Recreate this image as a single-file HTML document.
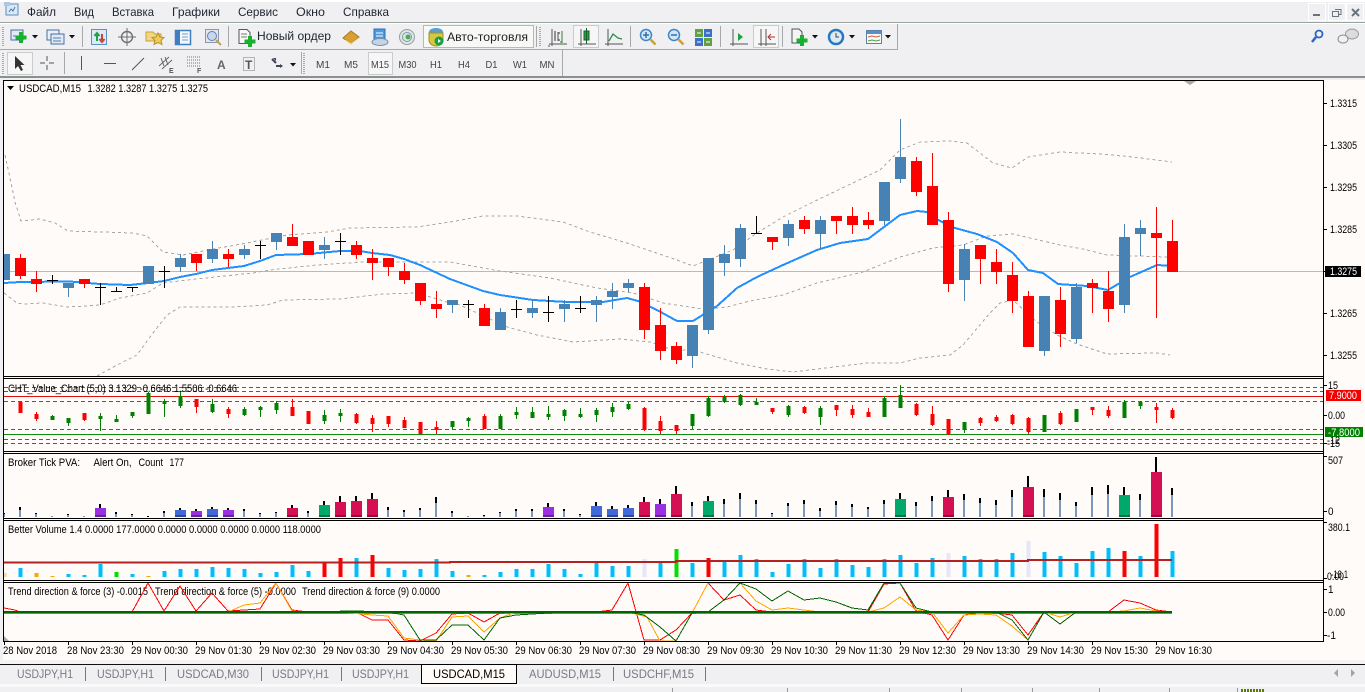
<!DOCTYPE html>
<html><head><meta charset="utf-8"><title>MT4</title>
<style>
html,body{margin:0;padding:0;width:1365px;height:692px;overflow:hidden;background:#f0eff2}
svg{display:block;position:absolute;left:0;top:0}
text{font-family:"Liberation Sans","Noto Sans CJK SC",sans-serif;font-size:11px;fill:#000}
.m text{font-size:12px;fill:#1c2530}
.tf text{font-size:10.5px;fill:#444}
.tab text{font-size:12px;fill:#7a7a80}
.c path{shape-rendering:crispEdges;fill:none}
</style></head><body>
<svg width="1365" height="692" viewBox="0 0 1365 692">
<!-- chrome -->
<rect width="1365" height="692" fill="#f0eff2"/>
<rect width="1365" height="2" fill="#fff"/>
<g shape-rendering="crispEdges">
<rect y="22" width="1365" height="1" fill="#9aa5a0"/><rect y="23" width="1365" height="1" fill="#fff"/>
<rect y="49" width="898" height="1" fill="#a5aaa8"/><rect x="897" y="24" width="1" height="26" fill="#a5aaa8"/>
<rect x="562" y="50" width="1" height="26" fill="#a5aaa8"/>
<rect y="76" width="1365" height="2" fill="#8a908e"/>
</g>
<!-- menu -->
<g>
<rect x="6" y="4" width="12" height="11" fill="#dbe9f7" stroke="#5b8cc0"/><path d="M9 12l2-3 2 2 2-4" stroke="#4a7ab0" fill="none"/><rect x="4" y="2" width="6" height="4" fill="#a9c8e8"/>
</g>
<g class="m">
<text x="27" y="16" textLength="29" lengthAdjust="spacingAndGlyphs">Файл</text>
<text x="74" y="16" textLength="20" lengthAdjust="spacingAndGlyphs">Вид</text>
<text x="112" y="16" textLength="42" lengthAdjust="spacingAndGlyphs">Вставка</text>
<text x="172" y="16" textLength="48" lengthAdjust="spacingAndGlyphs">Графики</text>
<text x="238" y="16" textLength="40" lengthAdjust="spacingAndGlyphs">Сервис</text>
<text x="296" y="16" textLength="29" lengthAdjust="spacingAndGlyphs">Окно</text>
<text x="343" y="16" textLength="46" lengthAdjust="spacingAndGlyphs">Справка</text>
<text x="257" y="40" textLength="74" lengthAdjust="spacingAndGlyphs">Новый ордер</text>
</g>
<!-- window buttons -->
<g shape-rendering="crispEdges" fill="none" stroke="#fff"><rect x="1308.5" y="3.5" width="17" height="17"/><rect x="1328.5" y="3.5" width="17" height="17"/><rect x="1346.5" y="3.5" width="17" height="17"/></g>
<rect x="1313" y="14" width="7" height="2" fill="#6a7480"/>
<path d="M1335 9.5h6v5h-2M1332.5 11.5h6v5h-6z" fill="none" stroke="#6a7480"/>
<path d="M1352 9l7 7M1359 9l-7 7" stroke="#6a7480" stroke-width="2"/>
<!-- grips -->
<path d="M3 27V46M3 53V74M540 27V46M304 53V74" stroke="#a8aca8" stroke-width="2" stroke-dasharray="1 1"/>
<path d="M82.500 26V47M228.500 26V47M536.500 26V47M630.500 26V47M720.500 26V47M782.500 26V47M64.500 52V74M301.500 52V74" stroke="#a5aaa8" shape-rendering="crispEdges"/>
<!-- toolbar selected boxes -->
<g shape-rendering="crispEdges">
<rect x="573.500" y="25.500" width="25" height="22" fill="#f6f6f6" stroke="#c8cccc"/>
<rect x="753.500" y="25.500" width="25" height="22" fill="#f6f6f6" stroke="#c8cccc"/>
<rect x="7.500" y="52.500" width="25" height="22" fill="#f6f6f6" stroke="#c8cccc"/>
<rect x="368.500" y="52.500" width="24" height="22" fill="#f6f6f6" stroke="#c8cccc"/>
<rect x="423.500" y="25.500" width="110" height="22" fill="#f8f8f6" stroke="#b5b9b9"/>
</g>
<!-- toolbar 1 icons -->
<rect x="11" y="30" width="12" height="10" fill="#dfeaf6" stroke="#47709e"/><path d="M13 36h8" stroke="#47709e"/>
<path d="M21 32v11M15.500 37.500h11" stroke="#18b030" stroke-width="4"/>
<path d="M32 35h6l-3 3.500z" fill="#111"/>
<rect x="47" y="30" width="12" height="10" fill="#e8f0f8" stroke="#47709e"/><rect x="51" y="34" width="13" height="10" fill="#dfeaf6" stroke="#47709e"/><path d="M53 38h8M53 41h8" stroke="#5a7fa8"/>
<path d="M69 35h6l-3 3.500z" fill="#111"/>
<rect x="91.500" y="29.500" width="15" height="15" fill="#dceaf8" stroke="#5a92c8"/><path d="M97 41v-6M94.500 36l2.500-3 2.500 3" stroke="#20a040" fill="none" stroke-width="2"/><path d="M102 34v6M99.500 39l2.500 3 2.500-3" stroke="#d04030" fill="none" stroke-width="2"/>
<circle cx="127" cy="37" r="5.500" fill="none" stroke="#6f6f6f" stroke-width="1.400"/><path d="M127 28v18M118 37h18" stroke="#6f6f6f"/>
<path d="M146 32h7l2 2h6v7h-15z" fill="#f2d680" stroke="#c8a040"/><path d="M158 33l2 4 4 .5-3 3 1 4-4-2-4 2 1-4-3-3 4-.5z" fill="#f0cc50" stroke="#b89030"/>
<rect x="175.500" y="30.500" width="15" height="14" fill="#f4f8fc" stroke="#3f7fc0" stroke-width="1.500"/><rect x="176" y="31" width="4" height="13" fill="#3f7fc0"/><path d="M182 34h6M182 37h6M182 40h6" stroke="#70a0d0"/>
<rect x="205.500" y="29.500" width="13" height="13" fill="#e3e8f0" stroke="#8a96a8"/><circle cx="212" cy="36" r="4.500" fill="#c8d8ec" stroke="#6080a8"/><path d="M216 40l5 5" stroke="#c8a050" stroke-width="2"/>
<path d="M239 29.500h8l3 3v11h-11z" fill="#f8f8f8" stroke="#555"/><path d="M241 34h6M241 37h6" stroke="#777"/>
<path d="M250 36v11M244.500 41.500h11" stroke="#18b030" stroke-width="4"/>
<path d="M343 38l8-7 8 6-8 7z" fill="#d8a030" stroke="#a87820"/><path d="M345 40l6 4 8-6" stroke="#f5e2a0" fill="none"/>
<rect x="374" y="29" width="11" height="11" fill="#4b9ae0" stroke="#2c70b8"/><path d="M376 33h7M376 36h7" stroke="#fff"/><ellipse cx="380" cy="42" rx="8" ry="3.500" fill="#c4d4e4" stroke="#7a90a8"/>
<circle cx="407" cy="37" r="7.500" fill="#dfe8de" stroke="#90a0a0"/><circle cx="407" cy="37" r="4.500" fill="none" stroke="#7a98b8"/><circle cx="408" cy="37" r="2.500" fill="#50a860"/>
<ellipse cx="436" cy="32" rx="7" ry="4" fill="#5b9fd0"/><path d="M429 33h14v7a7 6 0 0 1-14 0z" fill="#d8c840" stroke="#a09020"/><circle cx="439" cy="41" r="4.500" fill="#18a040"/><path d="M438 39l3 2-3 2z" fill="#fff"/>
<text x="447" y="41" textLength="81" lengthAdjust="spacingAndGlyphs" style="font-size:12px;fill:#222">Авто-торговля</text>
<g fill="none" stroke="#555"><path d="M552 29v17M549 44h18M550 46h-2M558 32v9"/></g>
<path d="M555 31v10M560 33h-2M558 40h2" stroke="#333" fill="none"/><path d="M562 31v12M560 42h2" stroke="#308030" fill="none"/>
<path d="M581 29v17M578 44h18" stroke="#555" fill="none"/><rect x="584" y="31" width="5" height="9" fill="#28a040" stroke="#186028"/><path d="M586.500 28v16" stroke="#186028"/>
<path d="M608 29v17M605 44h18" stroke="#555" fill="none"/><path d="M609 41l4-7 5 4 4 1" stroke="#2f8f50" fill="none" stroke-width="1.300"/>
<circle cx="646" cy="35" r="5.500" fill="#d4e6f6" stroke="#3d86c8" stroke-width="1.500"/><path d="M643 35h6M646 32v6" stroke="#2f70b0" stroke-width="1.500"/><path d="M650.500 39.500l5 5" stroke="#c8a040" stroke-width="2.500"/>
<circle cx="674" cy="35" r="5.500" fill="#d4e6f6" stroke="#3d86c8" stroke-width="1.500"/><path d="M671 35h6" stroke="#2f70b0" stroke-width="1.500"/><path d="M678.500 39.500l5 5" stroke="#c8a040" stroke-width="2.500"/>
<g shape-rendering="crispEdges"><rect x="695" y="29" width="8" height="8" fill="#60a040"/><rect x="704" y="29" width="8" height="8" fill="#3a70c8"/><rect x="695" y="38" width="8" height="8" fill="#3a70c8"/><rect x="704" y="38" width="8" height="8" fill="#60a040"/><path d="M697 33h4M706 33h4M697 42h4M706 42h4" stroke="#fff"/></g>
<path d="M733 29v17M730 44h18" stroke="#555" fill="none"/><path d="M738 33l5 4-5 4z" fill="#20a040"/>
<path d="M761 29v17M758 44h18M766 29v17" stroke="#555" fill="none"/><path d="M768 37h7M771 34l-3 3 3 3" stroke="#b03030" fill="none"/>
<path d="M792 29h7l3 3v11h-10z" fill="#f4f4f4" stroke="#555"/><path d="M802 35v11M796.500 40.500h11" stroke="#18b030" stroke-width="4"/>
<path d="M812 35h6l-3 3.500z" fill="#111"/>
<circle cx="836" cy="37" r="7" fill="#dceaf6" stroke="#2878c0" stroke-width="2.500"/><path d="M836 33v4h3" stroke="#444" fill="none"/>
<path d="M849 35h6l-3 3.500z" fill="#111"/>
<rect x="866.500" y="30.500" width="15" height="13" fill="#f6f8fa" stroke="#5a82a8"/><rect x="867" y="31" width="14" height="3" fill="#5a90c8"/><path d="M868 37l4-1 4 1 4-1" stroke="#d06040" fill="none"/><path d="M868 41l4-1 4 1 4-1" stroke="#50a050" fill="none"/>
<path d="M885 35h6l-3 3.500z" fill="#111"/>
<circle cx="1319" cy="34" r="3.500" fill="none" stroke="#2f65c8" stroke-width="1.800"/><path d="M1316 37l-4 5" stroke="#2f65c8" stroke-width="2.500"/>
<ellipse cx="1352" cy="34" rx="6.500" ry="5" fill="#dcdcdc" stroke="#9a9a9a"/><ellipse cx="1343" cy="39" rx="5" ry="4" fill="#f0f0f0" stroke="#8a8a8a"/>
<!-- toolbar 2 icons -->
<path d="M15 56v13l3-3 3 5 2-1-2.500-5h4z" fill="#333"/>
<path d="M47 56v5M47 65v5M40 63h5M49 63h5" stroke="#555" fill="none"/>
<path d="M81.500 56v14M104 63.500h12M132 70l12-12" stroke="#555" fill="none"/>
<path d="M159 66l10-9M162 69l10-9M161 58l3 8M165 57l3 8" stroke="#666" fill="none"/><text x="169" y="73" style="font-size:7px;fill:#555;font-weight:bold">E</text>
<path d="M187 57h13M187 60h13M187 63h13M187 66h13" stroke="#777" stroke-dasharray="1 1" fill="none"/><text x="197" y="73" style="font-size:7px;fill:#555;font-weight:bold">F</text>
<text x="217" y="69" style="font-size:12px;fill:#666;font-weight:bold">A</text>
<rect x="243.500" y="57.500" width="11" height="13" fill="none" stroke="#777" stroke-dasharray="1 1"/><text x="245" y="69" style="font-size:12px;fill:#555;font-weight:bold">T</text>
<path d="M272 59l4 4M276 66h6" stroke="#445" stroke-width="2"/><path d="M273 58h3v3zM280 64l3 2-3 2z" fill="#445"/>
<path d="M290 63h6l-3 3.500z" fill="#111"/>
<g class="tf">
<text x="316" y="68" textLength="14" lengthAdjust="spacingAndGlyphs">M1</text><text x="344" y="68" textLength="14" lengthAdjust="spacingAndGlyphs">M5</text><text x="371" y="68" textLength="18" lengthAdjust="spacingAndGlyphs">M15</text><text x="398.500" y="68" textLength="18" lengthAdjust="spacingAndGlyphs">M30</text><text x="430" y="68" textLength="12" lengthAdjust="spacingAndGlyphs">H1</text><text x="458" y="68" textLength="12" lengthAdjust="spacingAndGlyphs">H4</text><text x="485.500" y="68" textLength="12" lengthAdjust="spacingAndGlyphs">D1</text><text x="513" y="68" textLength="14" lengthAdjust="spacingAndGlyphs">W1</text><text x="539.500" y="68" textLength="15" lengthAdjust="spacingAndGlyphs">MN</text>
</g>

<!-- chart bg -->
<rect x="3" y="80" width="1362" height="580" fill="#fffbf8"/>
<rect x="1362" y="78" width="3" height="584" fill="#fffbf8"/>
<rect x="0" y="78" width="1365" height="2" fill="#f0eff2"/>
<rect x="0" y="80" width="3" height="582" fill="#f0eff2"/>
<rect x="0" y="660" width="1365" height="4" fill="#f4f3f5"/>

<!-- main chart -->
<path d="M4 271.500H1323" stroke="#bdb9b3" shape-rendering="crispEdges"/>
<g fill="none" stroke="#aaa6a2" stroke-dasharray="3 3" shape-rendering="crispEdges">
<path d="M5 155L10 178 15 202 21 221 40 219 55 223 68 231 133 233 147 236 163 252 183 255 213 249 247 243 287 235 327 232 350 228 417 227 450 222 483 216 517 216 563 222 590 232 627 243 677 260 693 266 733 250 757 233 783 217 813 202 880 170 900 150 920 142 950 141 967 143 993 163 1012 168 1028 157 1060 152 1100 154 1133 157 1172 162"/>
<path d="M4 293L17 303 23 304 43 303 67 307 87 306 100 305 120 298 147 293 163 283 187 280 253 273 270 270 317 265 363 262 450 262 500 271 550 278 597 288 633 293 663 303 703 309 727 307 750 301 783 295 817 283 863 272 900 257 933 248 963 245 987 236 1013 234 1060 245 1083 249 1107 255 1167 257"/>
<path d="M97 376L117 365 137 355 153 333 167 315 180 307 233 307 267 305 283 300 340 299 383 294 417 293 447 302 460 305 507 327 537 335 573 342 620 339 650 342 667 348 700 352 737 363 767 369 793 372 867 363 900 363 920 358 950 355 963 345 990 313 1000 303 1013 300 1027 313 1037 322 1057 335 1077 344 1107 354 1157 353 1170 355"/>
</g>
<path fill="none" stroke="#1e90ff" stroke-width="2" shape-rendering="crispEdges" d="M4 283L20 282 70 281.500 100 284 130 285 148 283 164 281 180 277 196 274 212 270 228 268 244 266 260 261 276 255 292 254.500 308 254 340 251 360 251 372 253 390 255 404 259 420 265 450 279 483 291 500 295 533 300 567 302 603 302 627 298 638 301 657 310 677 321 693 321 717 306 737 288 757 277 783 265 817 250 840 243 868 239 900 215 917 211 927 212 938 220 955 228 977 234 997 242 1013 253 1028 270 1043 273 1058 284 1087 286 1108 290 1130 277 1157 265 1172 266"/>
<g class="c">
<path stroke="#4682b4" d="M68.500 283V297M180.500 254V272M212.500 241V263M244.500 245V259M276.500 233V250M324.500 237V259M452.500 300V313M500.500 308V330M532.500 300V318M564.500 300V322M596.500 296V322M612.500 283V309M628.500 279V292M692.500 325V368M708.500 258V334M724.500 245V276M740.500 224V267M788.500 220V246M820.500 216V250M884.500 182V225M900.500 119V183M964.500 244V301M1044.500 296V356M1076.500 283V343M1124.500 224V313M1140.500 220V256"/>
<path stroke="#4682b4" stroke-width="11" d="M68.500 283V288M148.500 266V284M180.500 258V267M212.500 249V259M244.500 249V255M276.500 233V242M324.500 245V250M452.500 300V305M500.500 312V330M532.500 308V313M564.500 304V309M596.500 300V305M612.500 291V297M628.500 283V288M692.500 325V356M708.500 258V330M724.500 254V263M740.500 228V259M788.500 224V238M820.500 220V234M884.500 182V221M900.500 157V179M964.500 249V280M1044.500 296V351M1076.500 287V339M1124.500 237V305M1140.500 228V234"/>
<path stroke="#4682b4" stroke-width="6" d="M7 254V280"/>
<path stroke="#ff0000" d="M20.500 254V279M36.500 271V292M84.500 279V288M196.500 254V271M228.500 249V267M292.500 224V246M356.500 241V259M372.500 249V280M388.500 258V276M404.500 263V284M420.500 283V305M436.500 291V318M484.500 304V326M644.500 283V339M660.500 308V360M676.500 342V364M772.500 237V250M804.500 216V234M836.500 216V234M852.500 207V234M868.500 212V229M916.500 157V196M932.500 153V225M948.500 212V292M980.500 245V284M996.500 249V284M1012.500 262V313M1028.500 291V347M1060.500 287V347M1092.500 279V313M1108.500 271V322M1156.500 207V318M1172.500 220V272"/>
<path stroke="#ff0000" stroke-width="11" d="M20.500 258V276M36.500 279V284M84.500 279V284M196.500 254V263M228.500 254V259M292.500 237V246M308.500 241V255M356.500 245V255M372.500 258V263M388.500 258V267M404.500 271V280M420.500 283V301M436.500 304V309M484.500 308V326M644.500 287V330M660.500 325V351M676.500 346V360M772.500 237V242M804.500 220V229M836.500 216V221M852.500 216V225M868.500 220V225M916.500 161V192M932.500 186V225M948.500 220V284M980.500 245V259M996.500 262V272M1012.500 275V301M1028.500 296V347M1060.500 300V334M1092.500 283V288M1108.500 291V309M1156.500 233V238M1172.500 241V272"/>
<path stroke="#000" d="M52.500 275V284M47 280.500H58M100.500 283V305M95 287.500H106M116.500 287V292M111 291.500H122M132.500 287V292M127 287.500H138M164.500 266V288M159 271.500H170M260.500 241V259M255 245.500H266M340.500 233V255M335 241.500H346M468.500 300V318M463 304.500H474M516.500 300V318M511 309.500H522M548.500 296V322M543 312.500H554M580.500 296V313M575 308.500H586M756.500 216V233M751 233.500H762"/>
</g>
<path d="M1184 81h12l-6 4z" fill="#a8a8a8"/>
<path d="M7 86h7l-3.500 4z" fill="#000"/>
<text x="19" y="92" textLength="62" lengthAdjust="spacingAndGlyphs">USDCAD,M15</text>
<text x="87.500" y="92" textLength="120.500" lengthAdjust="spacingAndGlyphs">1.3282 1.3287 1.3275 1.3275</text>

<!-- CHT panel -->
<g class="c">
<path stroke="#5a5a5a" stroke-dasharray="4 3" d="M4 387.500H1323M4 391.500H1323M4 401.500H1323M4 429.500H1323M4 439.500H1323M4 443.500H1323"/>
<path stroke="#e01010" d="M4 396.500H1323"/>
<path stroke="#108a10" d="M4 434.500H1323"/>
<path stroke="#ff0000" d="M20.500 401V413M36.500 412V421M84.500 413V421M196.500 399V413M228.500 407V418M292.500 399V416M308.500 411V424M356.500 413V424M372.500 415V432M388.500 416V427M404.500 417V428M420.500 422V434M436.500 421V434M484.500 414V429M644.500 407V431M660.500 416V434M676.500 425V434M772.500 408V414M804.500 406V414M836.500 405V416M852.500 405V418M868.500 408V417M916.500 403V416M932.500 406V426M948.500 419V435M980.500 417V426M996.500 415V422M1012.500 414V425M1028.500 417V434M1060.500 411V425M1092.500 407V415M1108.500 406V418M1156.500 403V423M1172.500 408V419"/>
<path stroke="#ff0000" stroke-width="4" d="M20.500 402V413M36.500 414V419M84.500 413V420M196.500 399V407M228.500 409V414M292.500 407V416M308.500 411V424M356.500 414V423M372.500 418V424M388.500 416V424M404.500 420V428M420.500 422V434M436.500 427V430M484.500 416V429M644.500 408V430M660.500 421V431M676.500 425V431M772.500 408V412M804.500 407V413M836.500 405V410M852.500 409V415M868.500 412V417M916.500 404V415M932.500 414V425M948.500 419V434M980.500 418V423M996.500 417V421M1012.500 415V424M1028.500 418V432M1060.500 413V424M1092.500 407V410M1108.500 410V416M1156.500 407V410M1172.500 410V418"/>
<path stroke="#008000" d="M52.500 415V420M68.500 418V426M100.500 413V431M116.500 415V422M132.500 412V418M148.500 392V414M164.500 399V417M180.500 391V408M212.500 399V413M244.500 407V416M260.500 406V417M276.500 401V414M324.500 410V424M340.500 409V422M452.500 421V430M468.500 417V427M500.500 414V429M516.500 407V419M532.500 407V418M548.500 406V420M564.500 409V421M580.500 408V418M596.500 408V422M612.500 403V417M628.500 402V410M692.500 414V429M708.500 396V417M724.500 395V403M740.500 394V406M756.500 398V405M788.500 405V417M820.500 406V425M884.500 396V417M900.500 385V408M964.500 422V433M1044.500 415V432M1076.500 409V422M1124.500 400V418M1140.500 401V409"/>
<path stroke="#008000" stroke-width="4" d="M52.500 416V420M68.500 418V423M100.500 416V419M116.500 419V422M132.500 412V416M148.500 393V414M164.500 401V404M180.500 396V406M212.500 404V412M244.500 409V415M260.500 407V410M276.500 403V410M324.500 415V421M340.500 413V416M452.500 421V427M468.500 418V421M500.500 416V429M516.500 412V415M532.500 412V418M548.500 414V417M564.500 410V416M580.500 414V417M596.500 410V415M612.500 407V412M628.500 404V409M692.500 414V426M708.500 398V416M724.500 397V402M740.500 395V405M756.500 402V405M788.500 406V415M820.500 408V417M884.500 398V417M900.500 395V408M964.500 422V430M1044.500 415V432M1076.500 409V422M1124.500 402V418M1140.500 402V406"/>
</g>
<text x="8" y="392" textLength="229" lengthAdjust="spacingAndGlyphs">CHT_Value_Chart (5,0) 3.1329 -0.6646 1.5506 -0.6646</text>

<!-- Broker panel -->
<text x="8" y="466" textLength="72" lengthAdjust="spacingAndGlyphs">Broker Tick PVA:</text>
<text x="93.500" y="466" textLength="38" lengthAdjust="spacingAndGlyphs">Alert On,</text>
<text x="138.500" y="466" textLength="24.500" lengthAdjust="spacingAndGlyphs">Count</text>
<text x="169.500" y="466" textLength="14.500" lengthAdjust="spacingAndGlyphs">177</text>
<g class="c">
<path stroke="#7c98bb" stroke-width="2" d="M4 513V517M20 507V517M36 513V517M52 516V517M68 514V517M84 516V517M116 512V517M132 514V517M148 516V517M164 511V517M244 509V517M260 513V517M276 512V517M308 511V517M388 507V517M404 510V517M420 508V517M436 497V517M452 511V517M468 516V517M484 515V517M500 512V517M516 509V517M532 509V517M564 509V517M580 514V517M692 502V517M724 499V517M740 493V517M756 500V517M772 513V517M788 503V517M804 500V517M820 508V517M836 501V517M852 504V517M868 507V517M884 500V517M916 502V517M932 496V517M964 494V517M980 498V517M996 500V517M1012 490V517M1044 489V517M1060 493V517M1076 502V517M1092 487V517M1108 485V517M1140 494V517M1172 488V517"/>
<path stroke="#000" stroke-width="2" d="M4 513V514M20 507V510M36 513V514M68 514V515M116 512V514M132 514V515M148 516V517M164 511V513M244 509V511M260 513V514M276 512V513M308 511V513M388 507V510M404 510V512M420 508V510M436 497V503M452 511V513M484 515V516M500 512V513M516 509V511M532 509V511M564 509V511M580 514V515M692 502V506M724 499V504M740 493V499M756 500V504M772 513V514M788 503V506M804 500V504M820 508V511M836 501V505M852 504V507M868 507V509M884 500V504M916 502V506M932 496V501M964 494V500M980 498V503M996 500V505M1012 490V497M1044 489V497M1060 493V500M1076 502V506M1092 487V495M1108 485V494M1140 494V500M1172 488V495M100 504V508M180 508V510M196 509V511M212 507V509M228 508V510M292 505V508M324 501V505M340 496V502M356 496V501M372 493V499M548 503V507M596 502V506M612 506V509M628 505V508M644 497V502M660 499V504M676 486V494M708 496V501M900 493V499M948 490V497M1028 476V487M1124 487V495M1156 457V472"/>
<path stroke="#9a30e0" stroke-width="11" d="M100.500 508V517M196.500 511V517M228.500 510V517M548.500 507V517M660.500 504V517"/>
<path stroke="#4169d8" stroke-width="11" d="M180.500 510V517M212.500 509V517M596.500 506V517M612.500 509V517M628.500 508V517"/>
<path stroke="#d40f54" stroke-width="11" d="M292.500 508V517M340.500 502V517M356.500 501V517M372.500 499V517M644.500 502V517M676.500 494V517M948.500 497V517M1028.500 487V517M1156.500 472V517"/>
<path stroke="#00a86b" stroke-width="11" d="M324.500 505V517M708.500 501V517M900.500 499V517M1124.500 495V517"/>
<path stroke="#000" stroke-opacity=".3" stroke-width="11" d="M100.500 515V517M180.500 515V517M196.500 515V517M212.500 515V517M228.500 515V517M292.500 515V517M324.500 515V517M340.500 515V517M356.500 515V517M372.500 515V517M548.500 515V517M596.500 515V517M612.500 515V517M628.500 515V517M644.500 515V517M660.500 515V517M676.500 515V517M708.500 515V517M900.500 515V517M948.500 515V517M1028.500 515V517M1124.500 515V517M1156.500 515V517"/>
</g>

<!-- Better volume -->
<text x="8" y="533" textLength="313" lengthAdjust="spacingAndGlyphs">Better Volume 1.4 0.0000 177.0000 0.0000 0.0000 0.0000 0.0000 118.0000</text>
<g class="c">
<path stroke="#00bfff" stroke-width="4" d="M20.500 568V577M68.500 574V577M84.500 575V577M100.500 564V577M132.500 574V577M164.500 571V577M180.500 569V577M196.500 569V577M212.500 567V577M228.500 568V577M244.500 569V577M260.500 573V577M276.500 572V577M292.500 565V577M308.500 571V577M356.500 558V577M388.500 568V577M404.500 570V577M420.500 569V577M436.500 559V577M452.500 571V577M484.500 575V577M500.500 572V577M516.500 569V577M532.500 569V577M548.500 564V577M564.500 569V577M580.500 574V577M596.500 563V577M612.500 566V577M628.500 566V577M660.500 563V577M692.500 563V577M724.500 560V577M740.500 555V577M756.500 559V577M772.500 572V577M788.500 564V577M804.500 559V577M820.500 568V577M836.500 559V577M852.500 565V577M868.500 567V577M884.500 559V577M900.500 555V577M916.500 563V577M932.500 558V577M964.500 556V577M980.500 559V577M996.500 559V577M1012.500 553V577M1044.500 552V577M1060.500 556V577M1076.500 563V577M1092.500 551V577M1108.500 548V577M1140.500 556V577M1172.500 551V577"/>
<path stroke="#ff0000" stroke-width="4" d="M324.500 563V577M340.500 558V577M372.500 555V577M708.500 558V577M1124.500 551V577M1156.500 524V577"/>
<path stroke="#ffa500" stroke-width="4" d="M36.500 573V577M52.500 576V577M148.500 576V577M468.500 575V577"/>
<path stroke="#f5d890" stroke-width="3" d="M5 573V577"/>
<path stroke="#00e000" stroke-width="4" d="M116.500 572V577M676.500 549V577"/>
<path stroke="#e6e6fa" stroke-width="4" d="M644.500 559V577M948.500 553V577M1028.500 541V577"/>
<path stroke="#b22222" stroke-width="2" d="M4 562.700H450V562H676V561H1028V560H1172"/>
</g>

<!-- Trend panel -->
<text x="8" y="595" textLength="140" lengthAdjust="spacingAndGlyphs">Trend direction &amp; force (3) -0.0015</text>
<text x="155" y="595" textLength="141" lengthAdjust="spacingAndGlyphs">Trend direction &amp; force (5) -0.0000</text>
<text x="302" y="595" textLength="138" lengthAdjust="spacingAndGlyphs">Trend direction &amp; force (9) 0.0000</text>
<path d="M4 636l5 5H4z" fill="#aaa"/>
<path d="M4 613.500H1172" stroke="#808080" shape-rendering="crispEdges"/>
<g fill="none" stroke-width="1" shape-rendering="crispEdges">
<path stroke="#ff0000" d="M4 608L15 610 20 612H132L148 583 164 611 180 586 196 611 212 593 228 611 244 610 260 609 276 583 292 610 308 612H356L372 620 388 620 404 640 420 641 436 633 452 614 468 613 484 622 500 613 516 612H596L612 610 628 583 644 640 660 640 676 630 692 613 708 583 724 600 740 595 756 610 772 612H868L884 584 900 583 916 611 932 615 948 640 964 615 980 612 996 613 1012 615 1028 635 1044 612H1108L1124 600 1140 603 1156 610 1172 612"/>
<path stroke="#ffa500" d="M228 612L244 605 260 603 276 583 292 611 308 612H340L372 615 388 616 404 638 420 640 436 641 452 617 468 616 484 632 500 618 516 612H628L647 617 660 641 676 641 692 613 708 583 740 583 756 601 772 610 788 608 804 610 820 612H868L884 608 900 597 916 610 932 612 948 633 964 615 980 614 996 615 1012 626 1028 640 1044 612 1060 617 1076 612H1108L1124 611 1140 608 1156 611 1172 612"/>
<path stroke="#006400" d="M340 611H356L388 612 404 615 420 640 436 640 452 625 468 625 484 640 500 618 516 615 532 614 548 613 564 612H628L644 615 660 627 676 641 692 613 708 612 724 600 740 583 756 589 772 601 788 591 804 600 820 598 836 602 852 608 868 610 884 583 900 583 916 608 932 612H996L1012 620 1028 640 1044 612 1060 624 1076 612H1172"/>
</g>
<path d="M4 612H1172" stroke="#006400" stroke-width="2" shape-rendering="crispEdges"/>

<!-- frames -->
<g shape-rendering="crispEdges" fill="none" stroke="#000">
<path d="M3.500 80V642M1323.500 80V642"/>
<path d="M3 80.500H1323M3 376.500H1323M3 378.500H1323M3 451.500H1323M3 453.500H1323M3 518.500H1323M3 520.500H1323M3 580.500H1323M3 582.500H1323M3 641.500H1323"/>
<path d="M1323 103.500h4M1323 145.500h4M1323 187.500h4M1323 229.500h4M1323 271.500h4M1323 313.500h4M1323 355.500h4M1323 385.500h4M1323 415.500h4M1323 443.500h4M1323 456.500h4M1323 511.500h4M1323 522.500h4M1323 578.500h4M1323 589.500h4M1323 612.500h4M1323 635.500h4"/>
<path d="M4.500 641v4M68.500 641v4M132.500 641v4M196.500 641v4M260.500 641v4M324.500 641v4M388.500 641v4M452.500 641v4M516.500 641v4M580.500 641v4M644.500 641v4M708.500 641v4M772.500 641v4M836.500 641v4M900.500 641v4M964.500 641v4M1028.500 641v4M1092.500 641v4M1156.500 641v4"/>
</g>
<!-- right axis labels -->
<g>
<text x="1330" y="107" textLength="27" lengthAdjust="spacingAndGlyphs">1.3315</text>
<text x="1330" y="149" textLength="27" lengthAdjust="spacingAndGlyphs">1.3305</text>
<text x="1330" y="191" textLength="27" lengthAdjust="spacingAndGlyphs">1.3295</text>
<text x="1330" y="233" textLength="27" lengthAdjust="spacingAndGlyphs">1.3285</text>
<text x="1330" y="317" textLength="27" lengthAdjust="spacingAndGlyphs">1.3265</text>
<text x="1330" y="359" textLength="27" lengthAdjust="spacingAndGlyphs">1.3255</text>
<rect x="1325" y="266" width="36" height="11" fill="#000"/>
<text x="1330" y="275" textLength="27" lengthAdjust="spacingAndGlyphs" style="fill:#fff">1.3275</text>
<text x="1328" y="389" textLength="10" lengthAdjust="spacingAndGlyphs">15</text>
<rect x="1326" y="390" width="35" height="11" fill="#f40000"/>
<text x="1329" y="399" textLength="28" lengthAdjust="spacingAndGlyphs" style="fill:#fff">7.9000</text>
<text x="1328" y="419" textLength="17" lengthAdjust="spacingAndGlyphs">0.00</text>
<rect x="1325" y="427" width="38" height="10" fill="#008000"/>
<text x="1328" y="436" textLength="32" lengthAdjust="spacingAndGlyphs" style="fill:#fff">-7.8000</text>
<text x="1327" y="447" textLength="13" lengthAdjust="spacingAndGlyphs">-15</text>
<text x="1327" y="444" textLength="13" lengthAdjust="spacingAndGlyphs">-12</text>
<text x="1328" y="464" textLength="15" lengthAdjust="spacingAndGlyphs">507</text>
<text x="1328" y="515" textLength="5.500" lengthAdjust="spacingAndGlyphs">0</text>
<text x="1328" y="531" textLength="22" lengthAdjust="spacingAndGlyphs">380.1</text>
<text x="1331" y="578" textLength="17" lengthAdjust="spacingAndGlyphs">-18.1</text>
<text x="1327" y="580" textLength="17" lengthAdjust="spacingAndGlyphs">0.00</text>
<text x="1328" y="593" textLength="5.500" lengthAdjust="spacingAndGlyphs">1</text>
<text x="1328" y="616" textLength="17" lengthAdjust="spacingAndGlyphs">0.00</text>
<text x="1327" y="639" textLength="9" lengthAdjust="spacingAndGlyphs">-1</text>
</g>
<!-- time labels -->
<g>
<text x="3" y="654" textLength="54" lengthAdjust="spacingAndGlyphs">28 Nov 2018</text>
<text x="67" y="654" textLength="57" lengthAdjust="spacingAndGlyphs">28 Nov 23:30</text>
<text x="131" y="654" textLength="57" lengthAdjust="spacingAndGlyphs">29 Nov 00:30</text>
<text x="195" y="654" textLength="57" lengthAdjust="spacingAndGlyphs">29 Nov 01:30</text>
<text x="259" y="654" textLength="57" lengthAdjust="spacingAndGlyphs">29 Nov 02:30</text>
<text x="323" y="654" textLength="57" lengthAdjust="spacingAndGlyphs">29 Nov 03:30</text>
<text x="387" y="654" textLength="57" lengthAdjust="spacingAndGlyphs">29 Nov 04:30</text>
<text x="451" y="654" textLength="57" lengthAdjust="spacingAndGlyphs">29 Nov 05:30</text>
<text x="515" y="654" textLength="57" lengthAdjust="spacingAndGlyphs">29 Nov 06:30</text>
<text x="579" y="654" textLength="57" lengthAdjust="spacingAndGlyphs">29 Nov 07:30</text>
<text x="643" y="654" textLength="57" lengthAdjust="spacingAndGlyphs">29 Nov 08:30</text>
<text x="707" y="654" textLength="57" lengthAdjust="spacingAndGlyphs">29 Nov 09:30</text>
<text x="771" y="654" textLength="57" lengthAdjust="spacingAndGlyphs">29 Nov 10:30</text>
<text x="835" y="654" textLength="57" lengthAdjust="spacingAndGlyphs">29 Nov 11:30</text>
<text x="899" y="654" textLength="57" lengthAdjust="spacingAndGlyphs">29 Nov 12:30</text>
<text x="963" y="654" textLength="57" lengthAdjust="spacingAndGlyphs">29 Nov 13:30</text>
<text x="1027" y="654" textLength="57" lengthAdjust="spacingAndGlyphs">29 Nov 14:30</text>
<text x="1091" y="654" textLength="57" lengthAdjust="spacingAndGlyphs">29 Nov 15:30</text>
<text x="1155" y="654" textLength="57" lengthAdjust="spacingAndGlyphs">29 Nov 16:30</text>
</g>
<!-- tabs -->
<g shape-rendering="crispEdges">
<rect x="0" y="664" width="1365" height="1" fill="#111"/>
<rect x="0" y="665" width="1365" height="19" fill="#f0eff2"/>
<rect x="421.500" y="664.500" width="95" height="19" fill="#fffbf8" stroke="#000"/>
<path d="M85.500 667V681M165.500 667V681M261.500 667V681M341.500 667V681M613.500 667V681M705.500 667V681" stroke="#777"/>
<rect x="0" y="684" width="1365" height="3" fill="#fbfafb"/>
<path d="M672.500 688V692M787.500 688V692M889.500 688V692M961.500 688V692M1032.500 688V692M1099.500 688V692M1169.500 688V692M1237.500 688V692" stroke="#999"/>
<path d="M1241 690.500H1264" stroke="#5c7a10" stroke-width="3" stroke-dasharray="2 1"/>
</g>
<g class="tab">
<text x="17" y="678" textLength="56" lengthAdjust="spacingAndGlyphs">USDJPY,H1</text>
<text x="97" y="678" textLength="57" lengthAdjust="spacingAndGlyphs">USDJPY,H1</text>
<text x="177" y="678" textLength="72" lengthAdjust="spacingAndGlyphs">USDCAD,M30</text>
<text x="272" y="678" textLength="57" lengthAdjust="spacingAndGlyphs">USDJPY,H1</text>
<text x="352" y="678" textLength="57" lengthAdjust="spacingAndGlyphs">USDJPY,H1</text>
<text x="433" y="678" textLength="72" lengthAdjust="spacingAndGlyphs" style="fill:#000">USDCAD,M15</text>
<text x="529" y="678" textLength="72" lengthAdjust="spacingAndGlyphs">AUDUSD,M15</text>
<text x="623" y="678" textLength="71" lengthAdjust="spacingAndGlyphs">USDCHF,M15</text>
</g>
<path d="M1338 669v8l-4-4zM1351 669v8l4-4z" fill="#a0a4a8"/>
</svg>
</body></html>
